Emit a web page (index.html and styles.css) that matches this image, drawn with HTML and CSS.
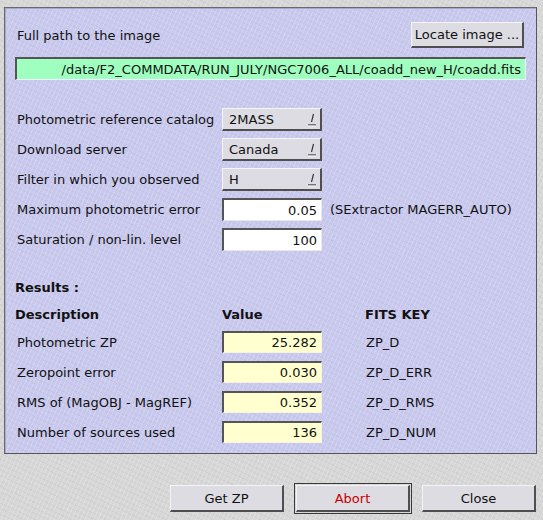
FILE: index.html
```html
<!DOCTYPE html>
<html>
<head>
<meta charset="utf-8">
<link rel="stylesheet" href="styles.css">
</head>
<body>
<div class="panel">
  <div class="top-row">
    <span class="lbl">Full path to the image</span>
    <div class="btn locate">Locate image ...</div>
  </div>
  <div class="path">/data/F2_COMMDATA/RUN_JULY/NGC7006_ALL/coadd_new_H/coadd.fits</div>

  <div class="form">
    <span class="lbl">Photometric reference catalog</span>
    <div class="menu"><span>2MASS</span><svg class="ind" width="10" height="16" viewBox="0 0 10 16"><path d="M6.5 3 L4.5 11" stroke="#333" stroke-width="1.2" fill="none"/><path d="M1 14 H9" stroke="#333" stroke-width="1.2"/><path d="M1 15 H9" stroke="#fff" stroke-width="1"/></svg></div>
    <span></span>

    <span class="lbl">Download server</span>
    <div class="menu"><span>Canada</span><svg class="ind" width="10" height="16" viewBox="0 0 10 16"><path d="M6.5 3 L4.5 11" stroke="#333" stroke-width="1.2" fill="none"/><path d="M1 14 H9" stroke="#333" stroke-width="1.2"/><path d="M1 15 H9" stroke="#fff" stroke-width="1"/></svg></div>
    <span></span>

    <span class="lbl">Filter in which you observed</span>
    <div class="menu"><span>H</span><svg class="ind" width="10" height="16" viewBox="0 0 10 16"><path d="M6.5 3 L4.5 11" stroke="#333" stroke-width="1.2" fill="none"/><path d="M1 14 H9" stroke="#333" stroke-width="1.2"/><path d="M1 15 H9" stroke="#fff" stroke-width="1"/></svg></div>
    <span></span>

    <span class="lbl">Maximum photometric error</span>
    <div class="entry">0.05</div>
    <span class="note">(SExtractor MAGERR_AUTO)</span>

    <span class="lbl">Saturation / non-lin. level</span>
    <div class="entry">100</div>
    <span></span>
  </div>

  <div class="results-title">Results :</div>
  <div class="results">
    <span class="hdr hdr-desc">Description</span>
    <span class="hdr">Value</span>
    <span class="hdr key-hdr">FITS KEY</span>

    <span class="lbl">Photometric ZP</span>
    <div class="entry out">25.282</div>
    <span class="key">ZP_D</span>

    <span class="lbl">Zeropoint error</span>
    <div class="entry out">0.030</div>
    <span class="key">ZP_D_ERR</span>

    <span class="lbl">RMS of (MagOBJ - MagREF)</span>
    <div class="entry out">0.352</div>
    <span class="key">ZP_D_RMS</span>

    <span class="lbl">Number of sources used</span>
    <div class="entry out">136</div>
    <span class="key">ZP_D_NUM</span>
  </div>
</div>

<div class="actions">
  <div class="btn action">Get ZP</div>
  <div class="btn action abort">Abort</div>
  <div class="btn action">Close</div>
</div>
</body>
</html>
```

FILE: styles.css
```css
* { box-sizing: border-box; }

html, body {
  margin: 0;
  padding: 0;
}

body {
  width: 543px;
  height: 520px;
  overflow: hidden;
  background-color: #d7d7d7;
  background-image:
    repeating-linear-gradient(115deg, rgba(255,255,255,0.18) 0 1px, transparent 1px 4px),
    repeating-linear-gradient(25deg, rgba(0,0,0,0.04) 0 1px, transparent 1px 5px);
  font-family: "DejaVu Sans", "Liberation Sans", sans-serif;
  font-size: 13px;
  color: #111;
  padding: 7px 6px 0 4px;
}

.panel {
  width: 533px;
  height: 447px;
  border: 1px solid #6a6a6a;
  border-right-color: #555;
  border-bottom-color: #555;
  box-shadow: inset 1px 1px 0 #a8a8c8;
  background-color: #c9c9ee;
  background-image:
    repeating-linear-gradient(115deg, rgba(255,255,255,0.16) 0 1px, transparent 1px 4px),
    repeating-linear-gradient(25deg, rgba(90,90,150,0.06) 0 1px, transparent 1px 5px);
  padding: 14px 10px 0 10px;
}

.lbl {
  padding-left: 2px;
  white-space: nowrap;
}

.top-row {
  display: flex;
  justify-content: space-between;
  align-items: center;
  height: 26px;
}

.btn {
  display: flex;
  align-items: center;
  justify-content: center;
  background: #dcdce2;
  border-top: 1px solid #f4f4f4;
  border-left: 1px solid #f4f4f4;
  border-right: 2px solid #4f4f4f;
  border-bottom: 2px solid #4f4f4f;
  color: #111;
  white-space: nowrap;
}

.locate {
  width: 113px;
  height: 26px;
  margin-right: 2px;
}

.path {
  margin-top: 9px;
  height: 23px;
  width: 511px;
  background: #9effbe;
  border-top: 2px solid #555;
  border-left: 2px solid #555;
  border-right: 1px solid #eef;
  border-bottom: 1px solid #eef;
  display: flex;
  align-items: center;
  justify-content: flex-end;
  padding-right: 4px;
  white-space: nowrap;
  overflow: hidden;
}

.form {
  margin-top: 28px;
  display: grid;
  grid-template-columns: 207px 100px 1fr;
  grid-auto-rows: 23px;
  row-gap: 7px;
  align-items: center;
}

.menu {
  height: 23px;
  background: #dcdce2;
  border-top: 1px solid #f4f4f4;
  border-left: 1px solid #f4f4f4;
  border-right: 2px solid #4f4f4f;
  border-bottom: 2px solid #4f4f4f;
  display: flex;
  align-items: center;
  justify-content: space-between;
  padding: 0 3px 0 6px;
}

.ind { display: block; }

.entry {
  height: 23px;
  background: #fff;
  border-top: 2px solid #555;
  border-left: 2px solid #555;
  border-right: 1px solid #e8e8e8;
  border-bottom: 1px solid #e8e8e8;
  display: flex;
  align-items: center;
  justify-content: flex-end;
  padding-right: 4px;
}

.entry.out {
  height: 22px;
  background: #ffffd0;
  border-right-color: #f4f4e0;
  border-bottom-color: #f4f4e0;
}

.note {
  padding-left: 8px;
  white-space: nowrap;
}

.results-title {
  margin-top: 29px;
  font-weight: bold;
  height: 16px;
  line-height: 16px;
}

.results {
  margin-top: 11px;
  display: grid;
  grid-template-columns: 207px 100px 1fr;
  grid-template-rows: 16px;
  grid-auto-rows: 22px;
  row-gap: 8px;
  align-items: center;
}

.results .hdr {
  font-weight: bold;
  line-height: 16px;
}

.results .hdr.key-hdr {
  padding-left: 43px;
}

.results .key {
  padding-left: 44px;
}

.actions {
  display: flex;
  justify-content: flex-end;
  gap: 12px;
  margin-top: 31px;
  margin-right: 1px;
}

.action {
  width: 114px;
  height: 27px;
}

.abort {
  color: #c80000;
  outline: 1px solid #3a3a3a;
  outline-offset: 1px;
}
```
